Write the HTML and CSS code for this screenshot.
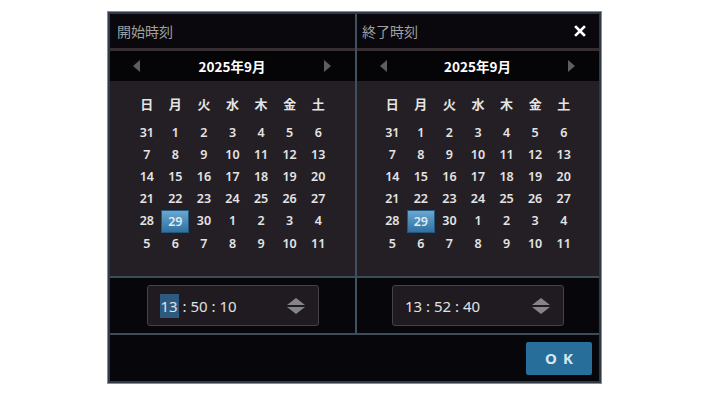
FILE: index.html
```html
<!DOCTYPE html>
<html lang="ja">
<head>
<meta charset="utf-8">
<link rel="stylesheet" href="styles.css">
</head>
<body>
<div class="dialog">
  <div class="inner">
    <div class="panels">
      <div class="panel">
        <div class="title"><span>開始時刻</span></div>
        <div class="nav">
          <span class="arrow left"></span>
          <span class="month">2025年9月</span>
          <span class="arrow right"></span>
        </div>
        <div class="cal">
          <div class="grid head">
            <span>日</span><span>月</span><span>火</span><span>水</span><span>木</span><span>金</span><span>土</span>
          </div>
          <div class="grid days">
            <span>31</span><span>1</span><span>2</span><span>3</span><span>4</span><span>5</span><span>6</span>
            <span>7</span><span>8</span><span>9</span><span>10</span><span>11</span><span>12</span><span>13</span>
            <span>14</span><span>15</span><span>16</span><span>17</span><span>18</span><span>19</span><span>20</span>
            <span>21</span><span>22</span><span>23</span><span>24</span><span>25</span><span>26</span><span>27</span>
            <span>28</span><span class="sel">29</span><span>30</span><span>1</span><span>2</span><span>3</span><span>4</span>
            <span>5</span><span>6</span><span>7</span><span>8</span><span>9</span><span>10</span><span>11</span>
          </div>
        </div>
        <div class="time">
          <div class="tbox">
            <span class="tval"><span class="hl">13</span> : 50 : 10</span>
            <span class="spin"><span class="up"></span><span class="down"></span></span>
          </div>
        </div>
      </div>
      <div class="sep"></div>
      <div class="panel right-panel">
        <div class="title"><span>終了時刻</span>
          <svg class="close" width="12" height="12" viewBox="0 0 12 12"><path d="M2 2L10 10M10 2L2 10" stroke="#ffffff" stroke-width="2.6" stroke-linecap="square"/></svg>
        </div>
        <div class="nav">
          <span class="arrow left"></span>
          <span class="month">2025年9月</span>
          <span class="arrow right"></span>
        </div>
        <div class="cal">
          <div class="grid head">
            <span>日</span><span>月</span><span>火</span><span>水</span><span>木</span><span>金</span><span>土</span>
          </div>
          <div class="grid days">
            <span>31</span><span>1</span><span>2</span><span>3</span><span>4</span><span>5</span><span>6</span>
            <span>7</span><span>8</span><span>9</span><span>10</span><span>11</span><span>12</span><span>13</span>
            <span>14</span><span>15</span><span>16</span><span>17</span><span>18</span><span>19</span><span>20</span>
            <span>21</span><span>22</span><span>23</span><span>24</span><span>25</span><span>26</span><span>27</span>
            <span>28</span><span class="sel">29</span><span>30</span><span>1</span><span>2</span><span>3</span><span>4</span>
            <span>5</span><span>6</span><span>7</span><span>8</span><span>9</span><span>10</span><span>11</span>
          </div>
        </div>
        <div class="time">
          <div class="tbox">
            <span class="tval">13 : 52 : 40</span>
            <span class="spin"><span class="up"></span><span class="down"></span></span>
          </div>
        </div>
      </div>
    </div>
    <div class="footer">
      <button class="ok">OK</button>
    </div>
  </div>
</div>
</body>
</html>
```

FILE: styles.css
```css
html, body {
  margin: 0;
  padding: 0;
  background: #ffffff;
}
body {
  font-family: "Noto Sans", "Noto Sans CJK JP", sans-serif;
}
.dialog {
  margin: 11px 0 0 107px;
  width: 493px;
  height: 371px;
  border: 1px solid #8c8c8c;
  background: #07060a;
}
.inner {
  height: 367px;
  border: 2px solid #2f3a46;
  display: flex;
  flex-direction: column;
  background: #07060a;
}
.panels {
  display: flex;
  height: 319px;
  border-bottom: 2px solid #3e4b58;
}
.panel {
  width: 245px;
  display: flex;
  flex-direction: column;
}
.right-panel {
  width: 242px;
}
.sep {
  width: 2px;
  background: #41505e;
}
.title {
  height: 34px;
  display: flex;
  align-items: center;
  justify-content: space-between;
  padding: 0 12px 0 7px;
  color: #a0a0a0;
  font-size: 14px;
  font-family: "Noto Sans CJK JP", sans-serif;
  border-bottom: 3px solid #372e32;
  background: #0a080c;
}
.right-panel .title {
  padding-left: 5px;
  padding-right: 13px;
}
.close {
  display: block;
}
.nav {
  height: 30px;
  display: flex;
  align-items: center;
  justify-content: space-between;
  padding: 0 24px 0 23px;
  background: #050407;
}
.month {
  color: #ffffff;
  font-weight: bold;
  font-size: 13.5px;
  font-family: "Noto Sans CJK JP", sans-serif;
}
.arrow {
  width: 0;
  height: 0;
  border-top: 6px solid transparent;
  border-bottom: 6px solid transparent;
}
.arrow.left {
  border-right: 7px solid #5e5e62;
}
.arrow.right {
  border-left: 7px solid #5e5e62;
}
.cal {
  height: 197px;
  background: #241f24;
  border-bottom: 2px solid #3e4b58;
  padding-top: 12px;
  box-sizing: border-box;
}
.grid {
  width: 200px;
  margin: 0 auto;
  display: grid;
  grid-template-columns: repeat(7, 1fr);
  text-align: center;
  color: #e4e4e4;
}
.head {
  font-family: "Noto Sans CJK JP", sans-serif;
  font-weight: bold;
  font-size: 13px;
  line-height: 22px;
  margin-bottom: 7px;
}
.days span {
  font-size: 12.5px;
  font-weight: 600;
  line-height: 22px;
  height: 22px;
}
.days .sel {
  margin: 0 0.3px;
  height: 21px;
  line-height: 21px;
  background: linear-gradient(#69a6d0, #3271a0);
  border: 1px solid #24577e;
  color: #dcecf6;
}
.time {
  flex: 1;
  display: flex;
  align-items: center;
  justify-content: center;
  background: #07060a;
}
.tbox {
  width: 172px;
  height: 41px;
  border: 1px solid #45434a;
  border-radius: 3px;
  background: #1f1b20;
  display: flex;
  align-items: center;
  justify-content: space-between;
  padding: 0 13px 0 12px;
  box-sizing: border-box;
}
.tval {
  color: #e2e2e2;
  font-size: 15px;
  font-family: "Noto Sans", sans-serif;
}
.hl {
  background: #2c5a80;
  padding: 2px 1px;
}
.spin {
  display: flex;
  flex-direction: column;
  gap: 2px;
}
.up, .down {
  width: 0;
  height: 0;
  border-left: 9px solid transparent;
  border-right: 9px solid transparent;
}
.up {
  border-bottom: 7px solid #858488;
}
.down {
  border-top: 7px solid #858488;
}
.footer {
  flex: 1;
  display: flex;
  justify-content: flex-end;
  align-items: center;
  padding-right: 7px;
  background: #07060a;
}
.ok {
  width: 66px;
  height: 33px;
  border: none;
  border-radius: 2px;
  background: #286e9b;
  color: #d6e6f0;
  font-family: "Noto Sans", sans-serif;
  font-weight: bold;
  font-size: 15px;
  letter-spacing: 6px;
  padding: 0 0 0 6px;
}
```
